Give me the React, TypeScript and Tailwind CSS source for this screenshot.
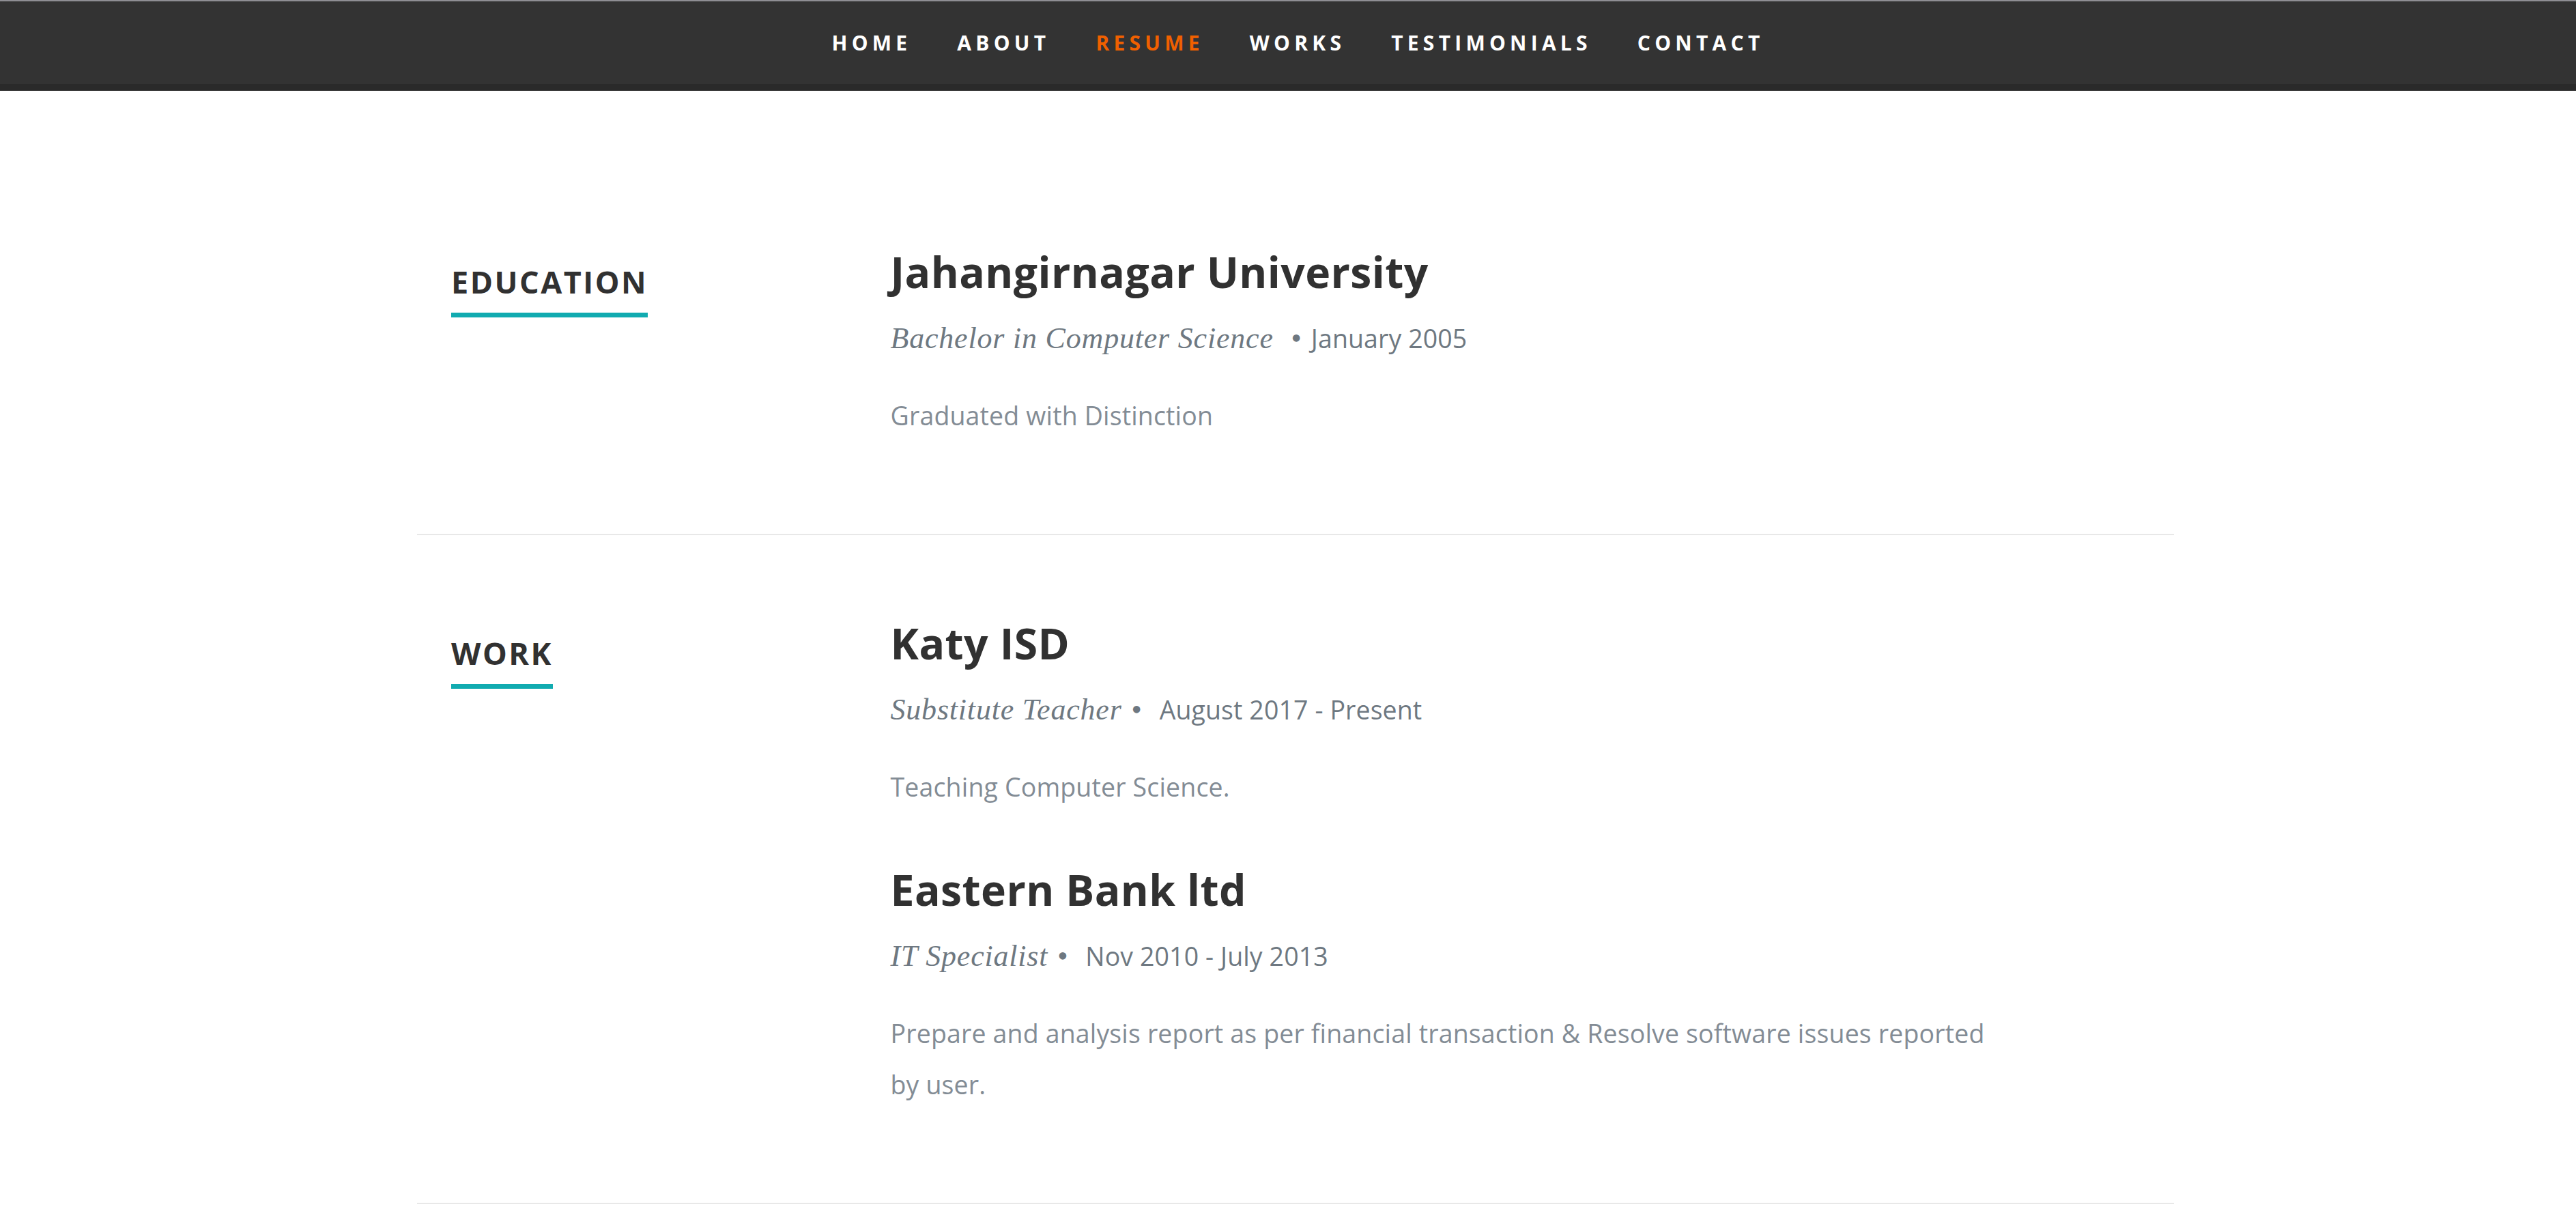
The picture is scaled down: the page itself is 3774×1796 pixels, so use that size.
const navItems = ["Home", "About", "Resume", "Works", "Testimonials", "Contact"];

const education = [
  {
    school: "Jahangirnagar University",
    degree: "Bachelor in Computer Science",
    graduated: "January 2005",
    description: "Graduated with Distinction",
  },
];

const work = [
  {
    company: "Katy ISD",
    title: "Substitute Teacher",
    years: "August 2017 - Present",
    description: "Teaching Computer Science.",
  },
  {
    company: "Eastern Bank ltd",
    title: "IT Specialist",
    years: "Nov 2010 - July 2013",
    description:
      "Prepare and analysis report as per financial transaction & Resolve software issues reported by user.",
  },
];

function Nav() {
  return (
    <nav className="border-t-2 border-b-[10px] border-t-[#8f8e94] border-b-[#2a2a2a] bg-[#333333]">
      <ul className="flex h-[121px] items-center justify-center pl-[29px]">
        {navItems.map((item) => (
          <li key={item}>
            <a
              href={`#${item.toLowerCase()}`}
              className={`block px-[33.5px] text-[30px] font-bold uppercase leading-[80px] tracking-[6.25px] ${
                item === "Resume" ? "text-[#F06000]" : "text-white"
              }`}
            >
              {item}
            </a>
          </li>
        ))}
      </ul>
    </nav>
  );
}

function Entry({
  heading,
  title,
  date,
  description,
  bulletFirst,
}: {
  heading: string;
  title: string;
  date: string;
  description: string;
  bulletFirst?: boolean;
}) {
  return (
    <div>
      <h3 className="text-[62.5px] font-bold leading-[75px] tracking-[0.4px] text-[#313131]">
        {heading}
      </h3>
      <p className="mb-[45px] mt-[31px] font-['Liberation_Serif',serif] text-[44px] italic leading-[60px] tracking-[0.8px] text-[#6E7881]">
        {title}
        {bulletFirst ? " " : ""}
        <span className="mx-[13.5px]">&bull;</span>
        {bulletFirst ? "" : " "}
        <em className="font-['Open_Sans',sans-serif] text-[37.5px] not-italic tracking-[0.1px]">
          {date}
        </em>
      </p>
      <p className="mb-[75px] text-[37.5px] leading-[75px] tracking-[0.15px] text-[#838C95]">
        {description}
      </p>
    </div>
  );
}

function ResumeRow({
  label,
  children,
}: {
  label: string;
  children: React.ReactNode;
}) {
  return (
    <div className="mb-[120px] flex border-b-2 border-[#E8E8E8] pb-[61px]">
      <div className="w-[643.5px] shrink-0 px-[50px] pt-[22.5px]">
        <h1 className="text-[45px] font-bold uppercase leading-[60px] tracking-[2.5px] text-[#313131]">
          <span className="border-b-[7px] border-[#11ABB0] pb-[15px]">
            {label}
          </span>
        </h1>
      </div>
      <div className="flex-1 pl-[50px] pr-[257px]">{children}</div>
    </div>
  );
}

export default function App() {
  return (
    <div className="min-h-screen bg-white font-['Open_Sans',sans-serif]">
      <Nav />
      <section id="resume" className="pl-[22px] pt-[227px] pb-[180px]">
        <div className="mx-auto w-[2574px]">
          <ResumeRow label="Education">
            {education.map((ed) => (
              <Entry
                key={ed.school}
                heading={ed.school}
                title={ed.degree}
                date={ed.graduated}
                description={ed.description}
                bulletFirst
              />
            ))}
          </ResumeRow>
          <ResumeRow label="Work">
            {work.map((job) => (
              <Entry
                key={job.company}
                heading={job.company}
                title={job.title}
                date={job.years}
                description={job.description}
              />
            ))}
          </ResumeRow>
        </div>
      </section>
    </div>
  );
}
